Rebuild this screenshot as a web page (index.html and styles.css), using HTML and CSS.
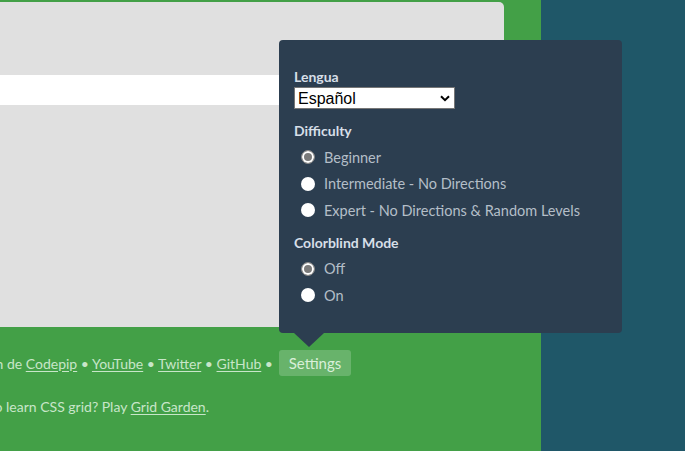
FILE: index.html
```html
<!DOCTYPE html>
<html lang="es">
<head>
<meta charset="utf-8">
<title>Flexbox Froggy</title>
<link rel="stylesheet" href="styles.css">
</head>
<body>
<div class="page">
  <div class="left">
    <div class="editor"><div class="bar"></div></div>
    <div class="credits">
      <span class="credits-text">Una creación de <a href="#">Codepip</a> • <a href="#">YouTube</a> • <a href="#">Twitter</a> • <a href="#">GitHub</a> •</span>
      <button class="settings">Settings</button>
    </div>
    <div class="promo"><span>Want to learn CSS grid? Play <a href="#">Grid Garden</a>.</span></div>

    <div class="popup">
      <div class="group lang-group">
        <div class="heading">Lengua</div>
        <div class="select-wrap">
          <select class="lang"><option>Español</option></select>
          <svg class="chev" width="10" height="7" viewBox="0 0 10 7"><path d="M1 1.2 L5 5.2 L9 1.2" fill="none" stroke="#000" stroke-width="2"/></svg>
        </div>
      </div>
      <div class="group radio-group">
        <div class="heading">Difficulty</div>
        <label class="row"><input type="radio" name="d" checked><span>Beginner</span></label>
        <label class="row"><input type="radio" name="d"><span>Intermediate - No Directions</span></label>
        <label class="row"><input type="radio" name="d"><span>Expert - No Directions &amp; Random Levels</span></label>
      </div>
      <div class="group radio-group">
        <div class="heading">Colorblind Mode</div>
        <label class="row"><input type="radio" name="c" checked><span>Off</span></label>
        <label class="row"><input type="radio" name="c"><span>On</span></label>
      </div>
      <div class="arrow"></div>
    </div>
  </div>
  <div class="right"></div>
</div>
</body>
</html>
```

FILE: styles.css
```css
html, body {
  margin: 0;
  padding: 0;
  overflow: hidden;
}
body {
  font-family: Lato, "Noto Sans", sans-serif;
  width: 685px;
  height: 451px;
}
.page {
  display: flex;
  height: 451px;
}
.left {
  position: relative;
  width: 541px;
  flex: none;
  background: #43a047;
  color: #c8e6c9;
}
.right {
  flex: 1;
  background: #1f5768;
}
.editor {
  margin-top: 2px;
  width: 504px;
  height: 325px;
  background: #e0e0e0;
  border-radius: 0 5px 5px 0;
  padding-top: 73px;
  box-sizing: border-box;
}
.bar {
  height: 30px;
  background: #ffffff;
}
.credits {
  width: 351px;
  margin-top: 23px;
  display: flex;
  justify-content: flex-end;
  align-items: center;
  gap: 6px;
  white-space: nowrap;
  font-size: 14px;
}
.credits a, .promo a {
  color: #c8e6c9;
  text-decoration: underline;
  text-underline-offset: 2px;
}
.settings {
  font-family: inherit;
  font-size: 15px;
  color: #d9efd9;
  background: rgba(255, 255, 255, 0.2);
  border: none;
  border-radius: 3px;
  height: 26px;
  width: 72px;
  padding: 0;
  flex: none;
}
.promo {
  width: 209px;
  margin-top: 21px;
  display: flex;
  justify-content: flex-end;
  white-space: nowrap;
  font-size: 14px;
  line-height: 20px;
}
.popup {
  position: absolute;
  left: 279px;
  top: 40px;
  width: 343px;
  height: 293px;
  box-sizing: border-box;
  background: #2c3e50;
  border-radius: 4px;
  padding: 28px 15px 0 15px;
  color: #b4bec8;
  font-size: 14.5px;
}
.arrow {
  position: absolute;
  left: 15px;
  bottom: -14px;
  width: 0;
  height: 0;
  border-left: 15px solid transparent;
  border-right: 15px solid transparent;
  border-top: 14px solid #2c3e50;
}
.lang-group {
  margin-bottom: 13px;
}
.radio-group {
  margin-bottom: 10px;
}
.radio-group .heading {
  margin-bottom: 4px;
}
.heading {
  font-weight: bold;
  font-size: 14px;
  color: #d7dfe8;
  line-height: 18px;
}
.select-wrap {
  position: relative;
  width: 161px;
  margin-top: 1px;
}
.lang {
  display: block;
  appearance: none;
  -webkit-appearance: none;
  margin: 0;
  width: 161px;
  height: 22px;
  font-family: Arial, "Liberation Sans", sans-serif;
  font-size: 16px;
  color: #000;
  background: #fff;
  border: 1px solid #767676;
  border-radius: 0;
  padding: 0 3px;
}
.chev {
  position: absolute;
  right: 5px;
  top: 8px;
  pointer-events: none;
}
.row {
  display: flex;
  align-items: center;
  height: 26.5px;
  padding-left: 7px;
}
.row input {
  appearance: none;
  -webkit-appearance: none;
  width: 14px;
  height: 14px;
  margin: 0 9px 0 0;
  border-radius: 50%;
  background: #ffffff;
  flex: none;
}
.row input:checked {
  background: #7a7a7a;
  box-shadow: inset 0 0 0 2px #ffffff;
  border: 1px solid #8a8a8a;
  box-sizing: border-box;
}
```
